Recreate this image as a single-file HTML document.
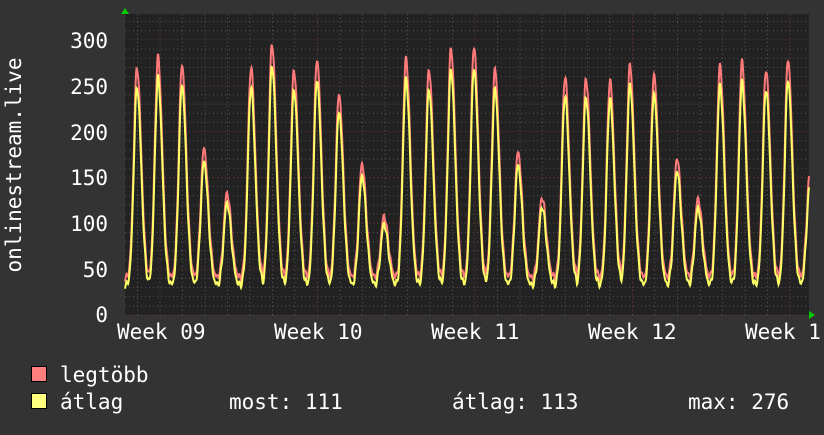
<!DOCTYPE html>
<html><head><meta charset="utf-8"><style>
body{margin:0;background:#333;width:824px;height:430px;overflow:hidden}
svg text{font-family:"DejaVu Sans Mono","Liberation Mono",monospace;fill:#fff;font-size:21px}
</style></head><body>
<svg width="824" height="430" xmlns="http://www.w3.org/2000/svg">
<rect width="824" height="430" fill="#333"/>
<rect x="125" y="14" width="684" height="301" fill="#222"/>
<g id="grid"></g>
<path id="red" fill="none" stroke="#ff7a7a" stroke-width="2"/>
<path id="yel" fill="none" stroke="#ffff66" stroke-width="2"/>
<polygon points="121,14 129,14 125,8" fill="#0c0"/>
<polygon points="809,311 809,319 815,315" fill="#0c0"/>
<g text-anchor="end">
<text x="108" y="48">300</text><text x="108" y="94">250</text><text x="108" y="140">200</text>
<text x="108" y="185">150</text><text x="108" y="231">100</text><text x="108" y="277">50</text>
<text x="108" y="322">0</text>
</g>
<text x="117" y="339">Week 09</text><text x="274" y="339">Week 10</text><text x="431" y="339">Week 11</text>
<text x="588" y="339">Week 12</text><text x="745" y="339">Week 1</text>
<text transform="translate(21,165) rotate(-90)" text-anchor="middle">onlinestream.live</text>
<rect x="31.5" y="366.5" width="15" height="15" fill="#ff7f7f" stroke="#000"/>
<rect x="31.5" y="393.5" width="15" height="15" fill="#ffff7f" stroke="#000"/>
<text x="60" y="382">legtöbb</text>
<text x="60" y="409">átlag</text>
<text x="229" y="409">most: 111</text>
<text x="452" y="409">átlag: 113</text>
<text x="688" y="409">max: 276</text>
</svg>
<script>
var g=document.getElementById("grid"),h="";
function ln(x1,y1,x2,y2,c){h+='<line x1="'+x1+'" y1="'+y1+'" x2="'+x2+'" y2="'+y2+'" stroke="'+c+'" stroke-dasharray="1,3"/>';}
for(var v=0;v<=320;v+=10){var y=315-v*0.917;if(y<14)break;ln(125,y,809,y,v%50==0?"#7a3a3a":"#555");}
for(var d=-10;d<40;d++){var x=160+d*22.5;if(x<125||x>809)continue;ln(x,14,x,315,d%7==0?"#7a3a3a":"#555");}
g.innerHTML=h;
var P=[[137,270],[158,281],[182,273],[204,182],[227,133],[251,270],[272,296],[294,267],[317,279],[339,241],[362,165],[384,108],[406,280],[429,268],[451,291],[474,293],[495,268],[518,178],[542,128],[565,260],[586,258],[610,256],[630,273],[654,263],[677,171],[698,127],[720,272],[742,276],[766,268],[788,279],[810,155]];
function f(x,k,b){var m=b;for(var i=0;i<P.length;i++){var dx=x-P[i][0],s=dx<0?3.2:4.2;var v=b+(P[i][1]*k-b)*Math.exp(-dx*dx/(2*s*s));if(v>m)m=v;}
m+=4*Math.sin(x*1.7)*Math.cos(x*0.3);return m;}
function path(k,b){var s="";for(var x=125;x<=809;x+=0.5){var y=315-f(x,k,b)*0.917;s+=(x==125?"M":"L")+x+","+y.toFixed(1);}return s;}
document.getElementById("red").setAttribute("d",path(1,40));
document.getElementById("yel").setAttribute("d",path(0.92,32));
</script>
</body></html>
